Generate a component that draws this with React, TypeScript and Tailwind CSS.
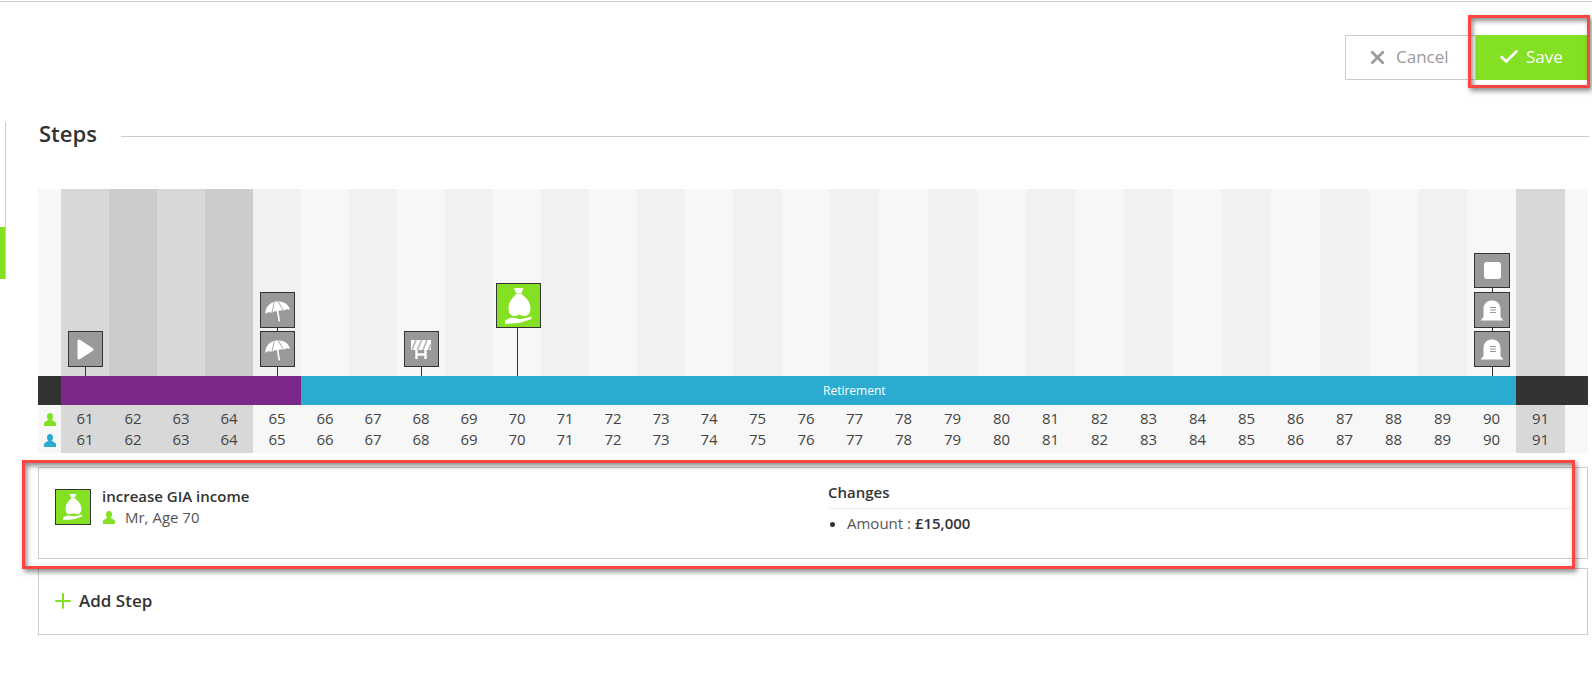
import React from "react";
import { Check, Plus, X } from "lucide-react";

type IconName = "play" | "stop" | "umbrella" | "barrier" | "grave";

const ages = Array.from({ length: 31 }, (_, i) => 61 + i);
const GREEN = "#84e023";
const BLUE = "#2babcf";

// columns are not all the same width in the source, from 77 on they are 49px
const colWidth = (age: number) => (age >= 77 || age === 75 ? "w-[49px]" : "w-12");

const stageBg = (age: number) => {
  if (age < 65 || age === 91) return age % 2 === 1 ? "bg-[#d8d8d8]" : "bg-[#cccccc]";
  return age % 2 === 1 ? "bg-[#f1f1f1]" : "bg-[#f7f7f7]";
};

const markers: Record<number, IconName[]> = {
  61: ["play"],
  65: ["umbrella", "umbrella"],
  68: ["barrier"],
  90: ["stop", "grave", "grave"],
};

function Glyph({ name }: { name: IconName }) {
  if (name === "play") {
    return (
      <svg width="17" height="21" viewBox="0 0 17 21" className="ml-px">
        <path d="M2 2 L15 10.5 L2 19 Z" fill="#fff" stroke="#fff" strokeWidth="3" strokeLinejoin="round" />
      </svg>
    );
  }
  if (name === "stop") {
    return <div className="w-[17px] h-[17px] rounded-[3px] bg-white" />;
  }
  if (name === "umbrella") {
    return (
      <svg width="27" height="23" viewBox="0 0 27 23">
        <g transform="rotate(-9 13.5 11)">
          <path d="M1 13 C1.5 7 6.5 2.5 13.5 2.5 C20.5 2.5 25.5 7 26 13 C24 11.5 21.5 11.5 19.5 13 C17.5 11.5 15.5 11.5 13.5 12.5 C11.5 11.5 9.5 11.5 7.5 13 C5.5 11.5 3 11.5 1 13 Z" fill="#fff" />
          <path d="M7.5 13 L11.5 3 M19.5 13 L15.5 3" stroke="#999" strokeWidth="0.8" fill="none" />
          <path d="M13.5 12 V22.5" stroke="#fff" strokeWidth="1.6" fill="none" />
        </g>
      </svg>
    );
  }
  if (name === "barrier") {
    return (
      <svg width="22" height="19" viewBox="0 0 22 19">
        <rect x="1" y="0" width="20" height="10" fill="#fff" />
        <path d="M2 10 L6 0 M7.5 10 L11.5 0 M13 10 L17 0 M18.5 10 L21 4" stroke="#bbb" strokeWidth="1.8" fill="none" />
        <path d="M6.5 10 V19 M15.5 10 V19 M6.5 14.5 H15.5" stroke="#fff" strokeWidth="2.4" fill="none" />
      </svg>
    );
  }
  return (
    <svg width="24" height="21" viewBox="0 0 24 21">
      <path d="M3.5 17 V9 C3.5 3 8 0.5 12 0.5 C16 0.5 20.5 3 20.5 9 V17 L23.5 20.5 H0.5 Z" fill="#fff" />
      <path d="M10 7.5 H16 M10 10 H16 M10 12.5 H16" stroke="#999" strokeWidth="1" fill="none" />
    </svg>
  );
}

function BagGlyph({ size }: { size: number }) {
  return (
    <svg width={(size * 27) / 36} height={size} viewBox="0 0 27 36">
      <path d="M9 0 H18.5 L16.5 5 H11 Z" fill="#fff" />
      <path d="M11.5 5.5 H16.5 C17.5 8 25 11 25.5 20 C25.5 25.5 23 28 19.5 28 C17.5 28 15.5 27.5 14.5 26 C13.5 27.5 11.5 28 9.5 28 C6 28 3.5 25.5 3.5 20 C4 11 10.5 8 11.5 5.5 Z" fill="#fff" />
      <path d="M0 33 L2.5 31 C6 29 9 29.5 12 30.5 C15 31.5 17 31 19 30.5 L26.5 28.5 L26.5 31 L16 34.5 C10 35.5 5 35.5 0 36 Z" fill="#fff" />
    </svg>
  );
}

function Stem({ className }: { className: string }) {
  return <div className={`w-px bg-[#333] ${className}`} />;
}

function MarkerStack({ icons }: { icons: IconName[] }) {
  const tall = icons.length === 3;
  return (
    <>
      {icons.map((name, i) => (
        <React.Fragment key={i}>
          {i > 0 && <Stem className={i === 1 && tall ? "h-1" : "h-[3px]"} />}
          <div
            className={`${tall ? "w-[36px]" : "w-[35px]"} ${
              i === 0 && tall ? "h-[35px]" : "h-[36px]"
            } border border-[#333] bg-[#999] flex items-center justify-center`}
          >
            <Glyph name={name} />
          </div>
        </React.Fragment>
      ))}
      <Stem className="h-[9px]" />
    </>
  );
}

function Person({ color, className }: { color: string; className?: string }) {
  return (
    <svg width="12" height="13" viewBox="0 0 12 13" className={className}>
      <ellipse cx="6" cy="3.6" rx="3" ry="3.6" fill={color} />
      <path d="M0 13 V10.5 C0 8.5 2.5 8 4 7 H8 C9.5 8 12 8.5 12 10.5 V13 Z" fill={color} />
    </svg>
  );
}

export default function App() {
  return (
    <div className="relative w-full h-[683px] overflow-hidden bg-white text-[#333] font-['Open_Sans',sans-serif]">
      <div className="mt-px h-px bg-[#ccc]" />

      {/* actions */}
      <div className="flex justify-end pr-[5px] mt-[33px] h-[45px] text-[17px]">
        <button className="w-[131px] pl-[21px] pb-px flex items-center gap-[8px] border border-[#ccc] text-[#999] bg-white">
          <X size={21} strokeWidth={3} />
          Cancel
        </button>
        <button className="w-[111px] pl-[22px] pb-px flex items-center gap-[6px] bg-[#84e023] text-white">
          <Check size={22} strokeWidth={3} />
          Save
        </button>
      </div>

      <div className="flex mt-[38px]">
        {/* side progress strip */}
        <div className="w-[6px] h-[157px] mt-1 border-r border-[#ccc] flex flex-col justify-end">
          <div className="h-[52px] bg-[#84e023]" />
        </div>

        <div className="ml-[32px] w-[1550px]">
          <div className="flex items-center h-8 mb-[39px] -mr-px">
            <h2 className="text-[22px] leading-8 w-[83px] pl-px font-semibold -mt-[3px]">Steps</h2>
            <div className="flex-1 h-px bg-[#ccc] mt-1" />
          </div>

          {/* timeline */}
          <div className="flex h-[187px] bg-[#f7f7f7]">
            <div className="w-[23px]" />
            {ages.map((age) => (
              <div
                key={age}
                className={`${colWidth(age)} ${stageBg(age)} ${age === 90 ? "pl-px" : ""} flex flex-col items-center justify-end`}
              >
                {markers[age] && <MarkerStack icons={markers[age]} />}
                {age === 70 && (
                  <>
                    <div className="w-[45px] h-[45px] ml-[3px] border border-[#333] bg-[#84e023] flex items-center justify-center">
                      <BagGlyph size={36} />
                    </div>
                    <Stem className="h-12" />
                  </>
                )}
              </div>
            ))}
          </div>

          <div className="flex h-[29px] bg-[#333] text-xs text-white">
            <div className="w-[23px]" />
            <div className="w-[240px] bg-[#7a288a]" />
            <div className="w-[1215px] bg-[#2babcf] pl-[522px] flex items-center">Retirement</div>
          </div>

          <div className="flex h-12 bg-[#f7f7f7] text-[15px] text-[#444]">
            <div className="w-[23px] py-[3px] flex flex-col">
              <div className="h-[21px] flex items-center justify-center pt-px">
                <Person color={GREEN} />
              </div>
              <div className="h-[21px] flex items-center justify-center pt-px">
                <Person color={BLUE} />
              </div>
            </div>
            {ages.map((age) => (
              <div
                key={age}
                className={`${colWidth(age)} ${age < 65 || age === 91 ? "bg-[#d8d8d8]" : ""} py-[3px] text-center leading-[21px]`}
              >
                <div>{age}</div>
                <div>{age}</div>
              </div>
            ))}
          </div>

          {/* selected step */}
          <div className="mt-[14px] h-[92px] border border-[#ccc] pl-4 pr-[15px] pt-[21px] flex text-[15px]">
            <div className="w-[773px] flex gap-[11px]">
              <div className="w-9 h-9 border border-[#333] bg-[#84e023] flex items-center justify-center">
                <BagGlyph size={26} />
              </div>
              <div>
                <div className="font-semibold leading-[18px] -mt-[2px]">increase GIA income</div>
                <div className="flex items-center gap-[10px] text-[#555] leading-[20px] mt-[2px]">
                  <Person color={GREEN} className="ml-px" />
                  Mr, Age 70
                </div>
              </div>
            </div>
            <div className="flex-1">
              <div className="font-semibold leading-[18px] -mt-[6px] pb-[7px] border-b border-[#eee]">Changes</div>
              <ul className="list-disc pl-[19px] mt-[4px] leading-[20px] text-[#555] marker:text-[#333]">
                <li>
                  Amount : <span className="font-semibold text-[#333]">£15,000</span>
                </li>
              </ul>
            </div>
          </div>

          <div className="mt-[9px] h-[67px] border border-[#ccc] pl-[12px] pb-[2px] flex items-center gap-[4px] text-[17px] font-semibold">
            <Plus size={24} strokeWidth={2} color={GREEN} />
            Add Step
          </div>
        </div>
      </div>

      {/* red annotation boxes from the screenshot */}
      <div className="absolute left-[1468px] top-[15px] w-[122px] h-[73px] border-[3px] border-[#ff4444] pointer-events-none shadow-[2px_3px_5px_rgba(0,0,0,0.45),inset_2px_3px_5px_rgba(0,0,0,0.45)]" />
      <div className="absolute left-[22px] top-[460px] w-[1553px] h-[109px] border-[3px] border-[#ff4444] pointer-events-none shadow-[2px_3px_5px_rgba(0,0,0,0.45),inset_2px_3px_5px_rgba(0,0,0,0.45)]" />
    </div>
  );
}
